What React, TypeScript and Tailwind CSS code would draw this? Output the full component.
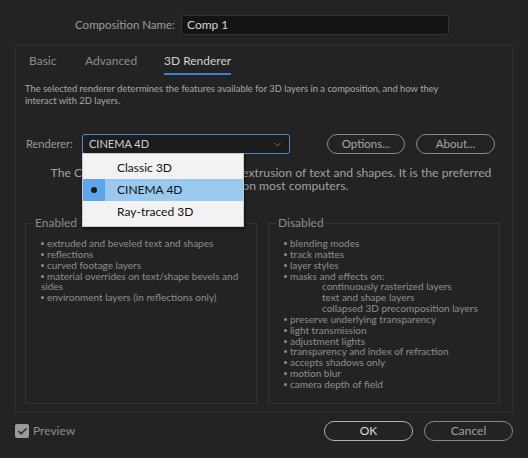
import { Check, ChevronDown } from 'lucide-react';

const font = { fontFamily: 'Lato, "Open Sans", sans-serif' };

const enabled = [
  'extruded and beveled text and shapes',
  'reflections',
  'curved footage layers',
  'material overrides on text/shape bevels and sides',
  'environment layers (in reflections only)',
];

const disabledTop = ['blending modes', 'track mattes', 'layer styles', 'masks and effects on:'];
const disabledSub = ['continuously rasterized layers', 'text and shape layers', 'collapsed 3D precomposition layers'];
const disabledBottom = [
  'preserve underlying transparency',
  'light transmission',
  'adjustment lights',
  'transparency and index of refraction',
  'accepts shadows only',
  'motion blur',
  'camera depth of field',
];

function Item({ text }: { text: string }): JSX.Element {
  return (
    <li>
      <span className="mb-[2px] mr-[3px] inline-block h-[3px] w-[3px] rounded-full bg-current align-middle" />
      {text}
    </li>
  );
}

export default function App(): JSX.Element {
  return (
    <div
      style={font}
      className="relative h-[458px] w-[528px] overflow-hidden bg-[#232323] text-[#a3a3a3] antialiased"
    >
      {/* Composition name */}
      <div className="flex items-center pt-[15px]">
        <label className="w-[181px] pr-[6px] text-right text-[11.5px] text-[#9c9c9c]">Composition Name:</label>
        <div className="flex h-[20px] w-[268px] items-center rounded-[2px] border border-[#353535] bg-[#141414] px-[5px] text-[12px] text-[#d6d6d6]">
          Comp 1
        </div>
      </div>

      {/* Tab panel */}
      <div className="mx-[15px] mt-[10px] h-[367px] border border-[#303030]">
        <div className="flex pl-[13px] pt-[6px] text-[12px]">
          <span className="w-[56px] text-[#8e8e8e]">Basic</span>
          <span className="w-[79px] text-[#8e8e8e]">Advanced</span>
          <span className="border-b-2 border-[#3c7ec8] pb-[3px] text-[#cfcfcf]">3D Renderer</span>
        </div>

        <p className="mt-[8px] w-[440px] px-[9px] text-[9.4px] leading-[12px] text-[#a8a8a8]">
          The selected renderer determines the features available for 3D layers in a composition, and how they
          interact with 2D layers.
        </p>

        {/* Renderer row */}
        <div className="mt-[27px] flex items-center pl-[10px]">
          <span className="w-[56px] text-[11px] text-[#9a9a9a]">Renderer:</span>
          <div className="flex h-[20px] w-[208px] items-center justify-between rounded-[3px] border border-[#4a86c8] bg-[#1c1c1c] px-[6px] text-[11px] text-[#cfcfcf]">
            <span>CINEMA 4D</span>
            <ChevronDown size={11} strokeWidth={1.5} className="text-[#9a9a9a]" />
          </div>
          <button className="ml-[37px] h-[20px] w-[78px] rounded-full border border-[#8a8a8a] text-[11.5px] text-[#a8a8a8]">
            Options...
          </button>
          <button className="ml-[11px] h-[20px] w-[79px] rounded-full border border-[#8a8a8a] text-[11.5px] text-[#a8a8a8]">
            About...
          </button>
        </div>

        <p className="ml-[30px] mt-[12px] w-[450px] whitespace-nowrap text-center text-[12.2px] leading-[13px] text-[#a0a0a0]">
          The CINEMA 4D renderer supports extrusion of text and shapes. It is the preferred
          <br />
          renderer on most computers.
        </p>

        {/* Enabled / Disabled */}
        <div className="mt-[22px] flex gap-[11px] px-[9px]">
          <fieldset className="h-[190px] w-[232px] border border-[#333333] px-[15px]">
            <legend className="ml-[-8px] px-[2px] text-[12px] text-[#8c8c8c]">Enabled</legend>
            <ul className="mt-[6px] text-[10px] leading-[10.85px] text-[#8f8f8f]">
              {enabled.map((t) => (
                <Item key={t} text={t} />
              ))}
            </ul>
          </fieldset>
          <fieldset className="h-[190px] w-[232px] border border-[#333333] px-[15px]">
            <legend className="ml-[-8px] px-[2px] text-[12px] text-[#8c8c8c]">Disabled</legend>
            <ul className="mt-[6px] text-[10px] leading-[10.85px] text-[#8f8f8f]">
              {disabledTop.map((t) => (
                <Item key={t} text={t} />
              ))}
              {disabledSub.map((t) => (
                <li key={t} className="pl-[38px]">
                  {t}
                </li>
              ))}
              {disabledBottom.map((t) => (
                <Item key={t} text={t} />
              ))}
            </ul>
          </fieldset>
        </div>
      </div>

      {/* Footer */}
      <div className="mt-[9px] flex items-center px-[15px]">
        <span className="flex h-[14px] w-[14px] items-center justify-center rounded-[2px] bg-[#9a9a9a]">
          <Check size={11} strokeWidth={3} className="text-[#232323]" />
        </span>
        <span className="ml-[4px] text-[12px] text-[#8e8e8e]">Preview</span>
        <button className="ml-auto h-[20px] w-[89px] rounded-full border border-[#b0b0b0] text-[12px] text-[#d8d8d8]">
          OK
        </button>
        <button className="ml-[11px] h-[20px] w-[89px] rounded-full border border-[#8a8a8a] text-[12px] text-[#a0a0a0]">
          Cancel
        </button>
      </div>

      {/* Open dropdown menu */}
      <div className="absolute left-[82px] top-[153px] w-[162px] border border-[#c8c8c8] bg-[#f2f2f2] py-[3px] text-[12px] text-[#111111] shadow-[1px_2px_3px_rgba(0,0,0,0.5)]">
        <div className="flex h-[22px] items-center pl-[34px]">Classic 3D</div>
        <div className="flex h-[22px] items-center bg-[#99c9ef]">
          <span className="flex h-full w-[22px] items-center justify-center bg-[#5ea6e8]">
            <span className="h-[6px] w-[6px] rounded-full bg-[#1a1a1a]" />
          </span>
          <span className="pl-[12px]">CINEMA 4D</span>
        </div>
        <div className="flex h-[22px] items-center pl-[34px]">Ray-traced 3D</div>
      </div>
    </div>
  );
}
